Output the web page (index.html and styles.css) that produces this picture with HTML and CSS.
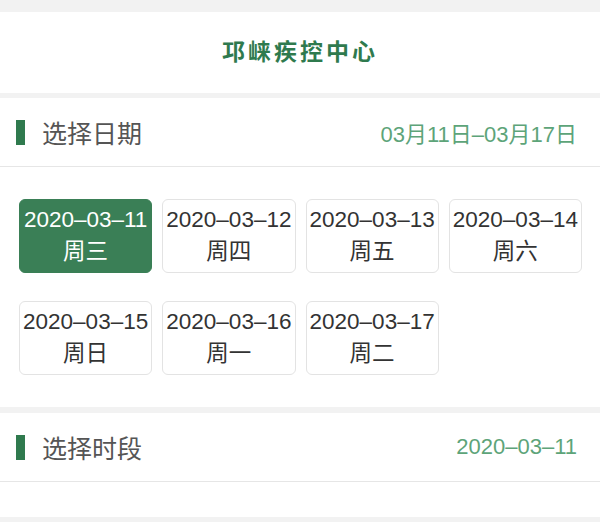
FILE: index.html
```html
<!DOCTYPE html>
<html lang="zh-CN">
<head>
    <meta charset="UTF-8">
    <meta name="viewport" content="width=device-width, initial-scale=1.0">
    <title>邛崃疾控中心 - 预约</title>
    <link rel="stylesheet" href="styles.css">
</head>
<body>
    <!-- 顶部标题 -->
    <div class="header">
        <div class="header-title">邛崃疾控中心</div>
    </div>

    <!-- 选择日期 -->
    <div class="panel">
        <div class="panel-head">
            <div class="panel-label"><span class="bar"></span>选择日期</div>
            <div class="panel-extra">03月11日–03月17日</div>
        </div>
        <div class="date-grid">
            <div class="date-item active"><div>2020–03–11</div><div>周三</div></div>
            <div class="date-item"><div>2020–03–12</div><div>周四</div></div>
            <div class="date-item"><div>2020–03–13</div><div>周五</div></div>
            <div class="date-item"><div>2020–03–14</div><div>周六</div></div>
            <div class="date-item"><div>2020–03–15</div><div>周日</div></div>
            <div class="date-item"><div>2020–03–16</div><div>周一</div></div>
            <div class="date-item"><div>2020–03–17</div><div>周二</div></div>
        </div>
    </div>

    <!-- 选择时段 -->
    <div class="panel">
        <div class="panel-head">
            <div class="panel-label"><span class="bar"></span>选择时段</div>
            <div class="panel-extra">2020–03–11</div>
        </div>
        <div class="time-list"></div>
    </div>
</body>
</html>
```

FILE: styles.css
```css
/* 基本样式 */
* {
    margin: 0;
    padding: 0;
    box-sizing: border-box;
}

body {
    background-color: #f2f2f2;
    font-family: "Liberation Sans", "Noto Sans CJK SC", sans-serif;
    color: #333;
    padding-top: 12px;
}

/* 顶部标题 */
.header {
    height: 81px;
    background-color: #fff;
    display: flex;
    align-items: center;
    justify-content: center;
    margin-bottom: 5px;
    padding-bottom: 6px;
}

.header-title {
    font-size: 23px;
    font-weight: bold;
    color: #2f7a4e;
    letter-spacing: 3px;
}

/* 区块 */
.panel {
    background-color: #fff;
    margin-bottom: 6px;
}

.panel-head {
    height: 69px;
    display: flex;
    align-items: center;
    justify-content: space-between;
    padding: 0 23px 0 16px;
    border-bottom: 1px solid #e6e6e6;
}

.panel-label {
    display: flex;
    align-items: center;
    font-size: 25px;
    color: #555;
}

.bar {
    width: 9px;
    height: 25px;
    background-color: #2f7a4e;
    margin-right: 17px;
}

.panel-extra {
    font-size: 22px;
    color: #5da479;
}

/* 日期选择 */
.date-grid {
    display: grid;
    grid-template-columns: repeat(4, 1fr);
    column-gap: 10px;
    row-gap: 28px;
    padding: 32px 18px 32px 19px;
}

.date-item {
    height: 74px;
    border: 1px solid #e3e3e3;
    border-radius: 6px;
    display: flex;
    flex-direction: column;
    justify-content: center;
    align-items: center;
    font-size: 22.5px;
    line-height: 32px;
    color: #333;
    white-space: nowrap;
}

.date-item.active {
    background-color: #3a7f56;
    border-color: #3a7f56;
    color: #fff;
}

/* 时段 */
.time-list {
    height: 35px;
}
```
